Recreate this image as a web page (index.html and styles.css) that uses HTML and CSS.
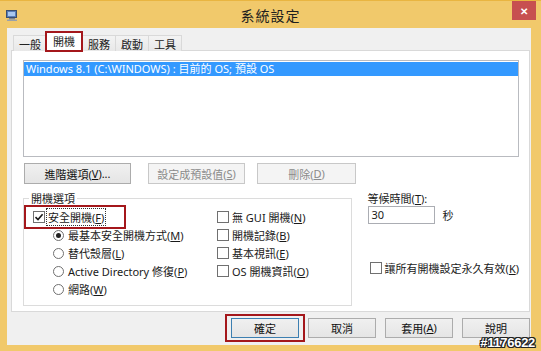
FILE: index.html
```html
<!DOCTYPE html>
<html lang="zh-Hant">
<head>
<meta charset="utf-8">
<title>系統設定</title>
<link rel="stylesheet" href="styles.css">
</head>
<body>
<div class="window">
  <div class="titlebar">
    <div class="tb-left">
      <svg class="app-icon" width="12" height="11" viewBox="0 0 12 11">
        <rect x="0.5" y="0.5" width="10" height="7" fill="#5a7fb8" stroke="#3b4f6e"/>
        <rect x="2" y="2" width="7" height="4" fill="#a9c8ee"/>
        <rect x="3" y="8" width="6" height="1.5" fill="#7a8391"/>
        <rect x="1" y="9.5" width="10" height="1.5" fill="#9aa1ab"/>
      </svg>
    </div>
    <div class="title">系統設定</div>
    <div class="tb-right"><div class="close">&#x2715;</div></div>
  </div>

  <div class="client">
    <div class="tabs">
      <div class="tab">一般</div>
      <div class="tab sel">開機</div>
      <div class="tab">服務</div>
      <div class="tab">啟動</div>
      <div class="tab">工具</div>
    </div>

    <div class="panel">
      <div class="listbox">
        <div class="item">Windows 8.1 (C:\WINDOWS) : 目前的 OS; 預設 OS</div>
      </div>

      <div class="btnrow">
        <div class="btn b1">進階選項(<u>V</u>)...</div>
        <div class="btn b2 dis">設定成預設值(<u>S</u>)</div>
        <div class="btn b3 dis">刪除(<u>D</u>)</div>
      </div>

      <div class="lower">
        <fieldset class="group">
          <legend>開機選項</legend>
          <div class="gcols">
            <div class="col-left">
              <div class="row safe">
                <span class="cb checked">
                  <svg width="10" height="10" viewBox="0 0 10 10"><path d="M1.5 5.2 L4 7.6 L8.6 2.2" fill="none" stroke="#1a1a1a" stroke-width="1.6"/></svg>
                </span>
                <span class="focus">安全開機(<u>F</u>)</span>
              </div>
              <div class="row sub"><span class="rd on"></span><span>最基本安全開機方式(<u>M</u>)</span></div>
              <div class="row sub"><span class="rd"></span><span>替代殼層(<u>L</u>)</span></div>
              <div class="row sub"><span class="rd"></span><span>Active Directory 修復(<u>P</u>)</span></div>
              <div class="row sub"><span class="rd"></span><span>網路(<u>W</u>)</span></div>
            </div>
            <div class="col-right">
              <div class="row"><span class="cb"></span><span>無 GUI 開機(<u>N</u>)</span></div>
              <div class="row"><span class="cb"></span><span>開機記錄(<u>B</u>)</span></div>
              <div class="row"><span class="cb"></span><span>基本視訊(<u>E</u>)</span></div>
              <div class="row"><span class="cb"></span><span>OS 開機資訊(<u>O</u>)</span></div>
            </div>
          </div>
        </fieldset>

        <div class="side">
          <div class="tlabel">等候時間(<u>T</u>):</div>
          <div class="timeout">
            <div class="input">30</div>
            <span class="sec">秒</span>
          </div>
          <div class="row perm"><span class="cb"></span><span>讓所有開機設定永久有效(<u>K</u>)</span></div>
        </div>
      </div>
    </div>

    <div class="footer">
      <div class="btn fb ok">確定</div>
      <div class="btn fb">取消</div>
      <div class="btn fb">套用(<u>A</u>)</div>
      <div class="btn fb">說明</div>
    </div>
  </div>

  <div class="watermark">#1176622</div>
</div>
</body>
</html>
```

FILE: styles.css
```css
* { box-sizing: border-box; }
html, body { margin: 0; padding: 0; }
body {
  width: 541px;
  height: 351px;
  overflow: hidden;
  background: #f1c96b;
  font-family: "Noto Sans", "Noto Sans CJK TC", sans-serif;
  font-size: 11px;
  color: #1a1a1a;
}
u { text-decoration: underline; text-underline-offset: 1px; }

.window {
  position: relative;
  height: 351px;
  display: flex;
  flex-direction: column;
  border-top: 1px solid #e9b541;
}

/* title bar */
.titlebar {
  height: 27px;
  display: grid;
  grid-template-columns: 1fr auto 1fr;
  align-items: center;
}
.tb-left { padding-left: 6px; padding-top: 2px; display: flex; }
.title {
  font-family: "Noto Sans CJK TC", sans-serif;
  font-size: 14px;
  color: #1e1e1e;
  letter-spacing: 1px;
}
.tb-right { justify-self: end; align-self: start; padding-right: 5px; }
.close {
  width: 24px;
  height: 19px;
  background: #c75050;
  color: #fff;
  font-size: 10px;
  font-weight: bold;
  display: flex;
  align-items: center;
  justify-content: center;
}

/* client */
.client {
  flex: 1;
  margin: 0 10px 6px 7px;
  background: #f0f0f0;
  display: flex;
  flex-direction: column;
  padding: 4px 1px 0 4px;
}

/* tabs */
.tabs {
  display: flex;
  align-items: flex-end;
  height: 19px;
  padding-left: 2px;
  margin-bottom: -1px;
  position: relative;
  z-index: 1;
}
.tab {
  height: 16px;
  padding: 0 5px;
  border: 1px solid #d9d9d9;
  border-bottom: none;
  margin-right: -1px;
  background: linear-gradient(#f3f3f3, #e8e8e8);
  display: flex;
  align-items: center;
  font-family: "Noto Sans CJK TC", sans-serif;
  color: #222;
}
.tab.sel {
  position: relative;
  height: 19px;
  padding: 0 7px 2px;
  margin: 0 -1px 0 -1px;
  background: #fff;
  z-index: 2;
}
.tab.sel::after {
  content: "";
  position: absolute;
  left: -1px; right: -1px; top: -2px; bottom: -1px;
  border: 2px solid #a4171b;
}

/* panel */
.panel {
  height: 262px;
  background: #fff;
  border: 1px solid #d9d9d9;
  padding: 9px 10px 0 11px;
}
.listbox {
  height: 97px;
  border: 1px solid #b9bbc0;
  padding-top: 1px;
}
.item {
  height: 14px;
  line-height: 14px;
  background: #3399ff;
  color: #fff;
  padding-left: 2px;
  white-space: nowrap;
}

.btnrow {
  display: flex;
  margin-top: 6px;
  padding-left: 1px;
}
.btn {
  height: 21px;
  border: 1px solid #acacac;
  background: linear-gradient(#f0f0f0, #e5e5e5);
  display: flex;
  align-items: center;
  justify-content: center;
  white-space: nowrap;
  color: #111;
}
.btn.dis { color: #8a8a8a; border-color: #c8c8c8; background: #f4f4f4; }
.b1 { width: 107px; }
.b2 { width: 97px; margin-left: 17px; }
.b3 { width: 99px; margin-left: 12px; }

/* lower area */
.lower {
  display: flex;
  align-items: flex-start;
  margin-top: 8px;
}
.group {
  width: 334px;
  margin: 0;
  padding: 3px 9px 7px 9px;
  border: 1px solid #dcdcdc;
  min-width: 0;
}
.group legend {
  padding: 0 2px;
  margin-left: -4px;
  line-height: 13px;
  font-family: "Noto Sans CJK TC", sans-serif;
}
.gcols { display: flex; }
.col-left { width: 184px; }
.row {
  height: 18px;
  display: flex;
  align-items: center;
  white-space: nowrap;
}
.row.sub { padding-left: 20px; }
.safe { position: relative; }
.safe::after {
  content: "";
  position: absolute;
  left: -9px; top: -3px; width: 98px; bottom: -3px;
  border: 2px solid #a4171b;
}
.focus { outline: 1px dotted #333; outline-offset: 0; padding: 0 1px; margin-left: -1px; }

.cb {
  width: 12px;
  height: 12px;
  border: 1px solid #707070;
  background: #fff;
  margin-right: 3px;
  display: inline-flex;
  align-items: center;
  justify-content: center;
  flex: none;
}
.rd {
  width: 11px;
  height: 11px;
  border: 1px solid #707070;
  border-radius: 50%;
  background: #fff;
  margin-right: 4px;
  flex: none;
  display: inline-flex;
  align-items: center;
  justify-content: center;
}
.rd.on::before {
  content: "";
  width: 5px;
  height: 5px;
  border-radius: 50%;
  background: #222;
}

.side { margin-left: 16px; }
.tlabel { line-height: 13px; }
.timeout { display: flex; align-items: center; margin-top: 1px; }
.input {
  width: 67px;
  height: 18px;
  border: 1px solid #abadb3;
  background: #fff;
  padding-left: 3px;
  line-height: 16px;
}
.sec { margin-left: 8px; font-family: "Noto Sans CJK TC", sans-serif; }
.perm { margin-top: 35px; padding-left: 2px; }

/* footer */
.footer {
  display: flex;
  justify-content: flex-end;
  gap: 9px;
  padding-top: 6px;
}
.fb { width: 68px; height: 20px; padding-bottom: 1px; }
.ok { position: relative; border-color: #3c7fb1; }
.ok::after {
  content: "";
  position: absolute;
  left: -7px; right: -7px; top: -5px; bottom: -5px;
  border: 2px solid #a4171b;
}

.watermark {
  position: absolute;
  right: 6px;
  bottom: 2px;
  font-family: "Liberation Sans", sans-serif;
  font-weight: bold;
  font-size: 13px;
  line-height: 13px;
  letter-spacing: -0.3px;
  color: #fff;
  text-shadow: 1px 0 #222, -1px 0 #222, 0 1px #222, 0 -1px #222, 1px 1px #222, -1px -1px #222, 1px -1px #222, -1px 1px #222;
}
```
